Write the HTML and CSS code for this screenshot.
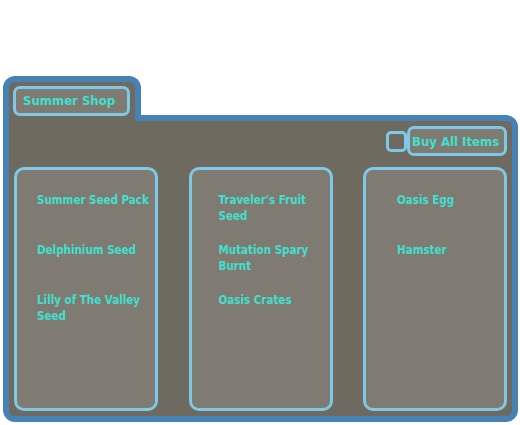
FILE: index.html
```html
<!DOCTYPE html>
<html lang="en">
<head>
  <meta charset="UTF-8">
  <title>Summer Shop</title>
  <link rel="stylesheet" href="styles.css">
</head>
<body>
  <div class="shop">
    <div class="tab">
      <div class="tab-title">Summer Shop</div>
    </div>
    <div class="panel">
      <div class="buy-row">
        <div class="buy-box"></div>
        <div class="buy-all">Buy All Items</div>
      </div>
      <div class="columns">
        <div class="column col-1">
          <div class="item">Summer Seed Pack</div>
          <div class="item">Delphinium Seed</div>
          <div class="item">Lilly of The Valley Seed</div>
        </div>
        <div class="column col-2">
          <div class="item">Traveler's Fruit Seed</div>
          <div class="item">Mutation Spary Burnt</div>
          <div class="item">Oasis Crates</div>
        </div>
        <div class="column col-3">
          <div class="item">Oasis Egg</div>
          <div class="item">Hamster</div>
        </div>
      </div>
    </div>
  </div>
</body>
</html>
```

FILE: styles.css
```css
html, body {
  margin: 0;
  padding: 0;
  background: white;
  font-family: "DejaVu Sans Condensed", "DejaVu Sans", sans-serif;
  font-weight: bold;
  color: #40e0d0;
}
body {
  padding: 76px 0 0 3px;
}
.shop {
  width: 515px;
  display: flex;
  flex-direction: column;
}
.tab {
  position: relative;
  z-index: 1;
  width: 138px;
  height: 45px;
  margin-bottom: -6px;
  background: #6e6a5f;
  border: 6px solid #4682b4;
  border-bottom: none;
  border-radius: 12px 12px 0 0;
  padding: 4px 0 0 4px;
  box-sizing: border-box;
}
.tab-title {
  width: 117px;
  height: 30px;
  box-sizing: border-box;
  border: 3px solid #7ec8e8;
  border-radius: 7px;
  background: #7f7a72;
  font-size: 13px;
  line-height: 23px;
  padding-left: 7px;
}
.panel {
  height: 307px;
  box-sizing: border-box;
  background: #6e6a5f;
  border: 6px solid #4682b4;
  border-radius: 0 12px 12px 12px;
  padding: 5px;
  display: flex;
  flex-direction: column;
}
.buy-row {
  display: flex;
  justify-content: flex-end;
  align-items: center;
  height: 30px;
}
.buy-box {
  width: 21px;
  height: 21px;
  box-sizing: border-box;
  border: 3px solid #7ec8e8;
  border-radius: 5px;
}
.buy-all {
  height: 30px;
  width: 100px;
  box-sizing: border-box;
  border: 3px solid #7ec8e8;
  border-radius: 7px;
  background: #7f7a72;
  font-size: 13px;
  line-height: 25px;
  padding: 0 2px;
}
.columns {
  margin-top: 11px;
  flex: 1;
  display: flex;
  justify-content: space-between;
}
.column {
  width: 144px;
  box-sizing: border-box;
  border: 3px solid #7ec8e8;
  border-radius: 10px;
  background: #7f7a72;
  padding-top: 22px;
  font-size: 11.5px;
  line-height: 16px;
}
.col-1 { padding-left: 20px; }
.col-2 { padding-left: 27px; }
.col-3 { padding-left: 31px; }
.item {
  height: 50px;
  max-width: 112px;
}
```
